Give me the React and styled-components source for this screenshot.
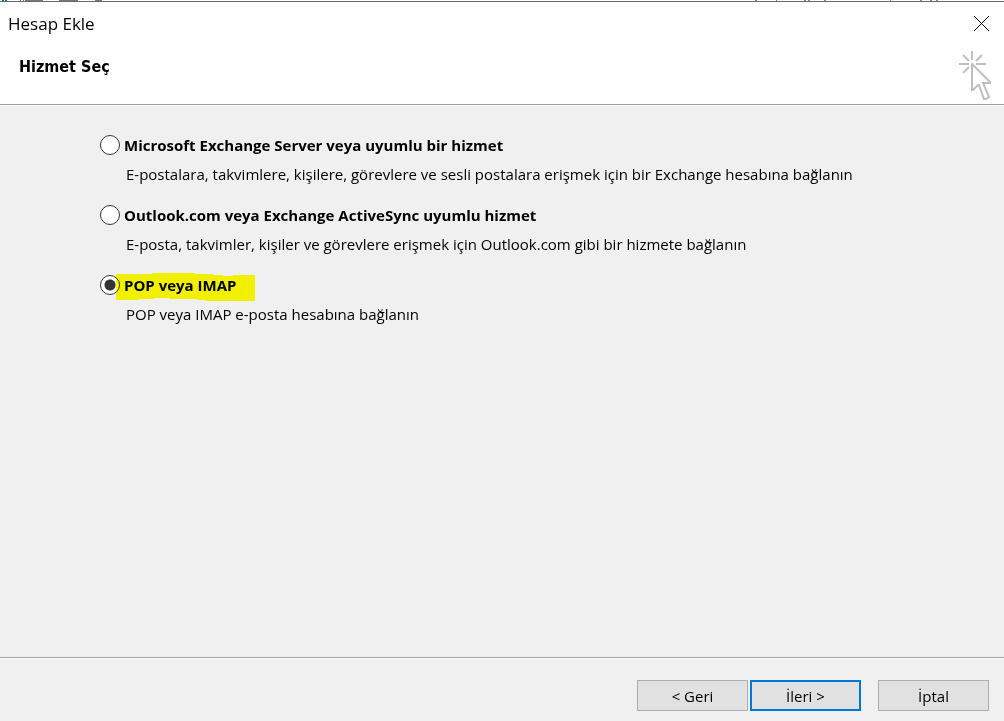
import React, { useState } from "react";
import styled, { createGlobalStyle } from "styled-components";

const GlobalStyle = createGlobalStyle`
  * { box-sizing: border-box; }
  body { margin: 0; background: #f0f0f0; }
`;

const Dialog = styled.form`
  display: flex;
  flex-direction: column;
  min-height: 100vh;
  background: #f0f0f0;
  color: #000;
  font: 15px/20px "Open Sans", "Noto Sans", sans-serif;
`;

const WindowEdge = styled.svg`
  display: block;
  flex: none;
  width: 100%;
  height: 2px;
  background: #fff;
`;

const Header = styled.header`
  background: #fff;
  border-bottom: 1px solid #a0a0a0;
  box-shadow: 0 1px #fff;
`;

const TitleBar = styled.div`
  display: flex;
  align-items: center;
  justify-content: space-between;
  height: 44px;
  padding: 0 14px 0 8px;
`;

const WindowTitle = styled.span`
  font-size: 17px;
  line-height: 24px;
`;

const CloseButton = styled.button`
  display: flex;
  padding: 0;
  border: 0;
  background: none;
`;

const Banner = styled.div`
  display: flex;
  align-items: flex-start;
  justify-content: space-between;
  height: 58px;
  padding: 4px 11px 0 19px;
`;

const PageTitle = styled.h1`
  margin: 7px 0 0;
  font: 700 16px/20px "DejaVu Sans Condensed", "DejaVu Sans", sans-serif;
`;

const Services = styled.main`
  flex: 1;
  display: flex;
  flex-direction: column;
  gap: 21px;
  padding: 30px 100px;
`;

const Option = styled.div`
  display: flex;
  flex-direction: column;
  gap: 9px;
`;

const OptionLabel = styled.label`
  position: relative;
  display: flex;
  align-items: center;
  align-self: flex-start;
  gap: 4px;
  height: 20px;
  font-weight: 700;
`;

const Radio = styled.input`
  appearance: none;
  width: 20px;
  height: 20px;
  margin: 0;
  border: 1px solid #333;
  border-radius: 50%;
  background: #fff;
  &:checked {
    background: radial-gradient(circle, #333 5px, #fff 6px);
  }
`;

const Marker = styled.svg`
  position: absolute;
  left: 16px;
  top: -2px;
  mix-blend-mode: multiply;
  pointer-events: none;
`;

const Description = styled.p`
  margin: 0 0 0 26px;
`;

const Footer = styled.footer`
  display: flex;
  justify-content: flex-end;
  gap: 17px;
  padding: 22px 15px 10px;
  border-top: 1px solid #a0a0a0;
  box-shadow: inset 0 1px #fff;
`;

const StepButtons = styled.div`
  display: flex;
  gap: 2px;
`;

const Button = styled.button`
  width: 111px;
  height: 31px;
  padding: 0;
  border: ${(p) => (p.$primary ? "2px solid #0078d7" : "1px solid #adadad")};
  background: #e1e1e1;
  color: #000;
  font: inherit;
`;

const services = [
  {
    id: "exchange",
    title: "Microsoft Exchange Server veya uyumlu bir hizmet",
    text: "E-postalara, takvimlere, kişilere, görevlere ve sesli postalara erişmek için bir Exchange hesabına bağlanın",
  },
  {
    id: "activesync",
    title: "Outlook.com veya Exchange ActiveSync uyumlu hizmet",
    text: "E-posta, takvimler, kişiler ve görevlere erişmek için Outlook.com gibi bir hizmete bağlanın",
  },
  {
    id: "pop",
    title: "POP veya IMAP",
    text: "POP veya IMAP e-posta hesabına bağlanın",
    marked: true,
  },
];

export default function App() {
  const [selected, setSelected] = useState("pop");
  return (
    <>
      <GlobalStyle />
      <Dialog onSubmit={(e) => e.preventDefault()}>
        <WindowEdge aria-hidden="true">
          <path d="M2 0h2M5 0h2" stroke="#0078b7" strokeWidth="2" />
          <path d="M20 0h1M23 0h1M25 0h18M59 0h19M95 0h7" stroke="#777" strokeWidth="2" />
          <path d="M755 0h2M776 0h1M804 0h2M808 0h2M824 0h2M890 0h1M920 0h2M930 0h2M936 0h2" stroke="#888" strokeWidth="2" />
          <rect y="1" width="100%" height="1" fill="#6b6b6b" />
        </WindowEdge>
        <Header>
          <TitleBar>
            <WindowTitle>Hesap Ekle</WindowTitle>
            <CloseButton type="button" aria-label="Kapat">
              <svg width="17" height="17" viewBox="0 0 17 17" fill="none" stroke="#000" strokeWidth="1">
                <path d="M1 0l15 15M16 0L1 15" />
              </svg>
            </CloseButton>
          </TitleBar>
          <Banner>
            <PageTitle>Hizmet Seç</PageTitle>
            <svg width="34" height="52" viewBox="0 0 34 52" fill="none" stroke="#bfbfbf" strokeWidth="2" aria-hidden="true">
              <path d="M13 1v9M0 14h10M17 14h10M4 5l6 6M23 5l-6 6M4 23l6-6" />
              <path d="M13 13v27h1l5-5h1l5 14h2l3-2-6-14h7v-1L13 14" />
            </svg>
          </Banner>
        </Header>
        <Services>
          {services.map((s) => (
            <Option key={s.id}>
              <OptionLabel>
                <Radio
                  type="radio"
                  name="service"
                  checked={selected === s.id}
                  onChange={() => setSelected(s.id)}
                  aria-describedby={s.id + "-text"}
                />
                {s.title}
                {s.marked && (
                  <Marker width="139" height="28" viewBox="0 0 139 28" aria-hidden="true">
                    <path
                      d="M0 1h36V0h43v1h18v1h10v1h10v-1h22v26H90v-1h-8v-1H53v-1H38v1H23v1H0z"
                      fill="#ffff00"
                    />
                  </Marker>
                )}
              </OptionLabel>
              <Description id={s.id + "-text"}>{s.text}</Description>
            </Option>
          ))}
        </Services>
        <Footer>
          <StepButtons>
            <Button type="button">&lt; Geri</Button>
            <Button type="submit" $primary>İleri &gt;</Button>
          </StepButtons>
          <Button type="button">İptal</Button>
        </Footer>
      </Dialog>
    </>
  );
}
